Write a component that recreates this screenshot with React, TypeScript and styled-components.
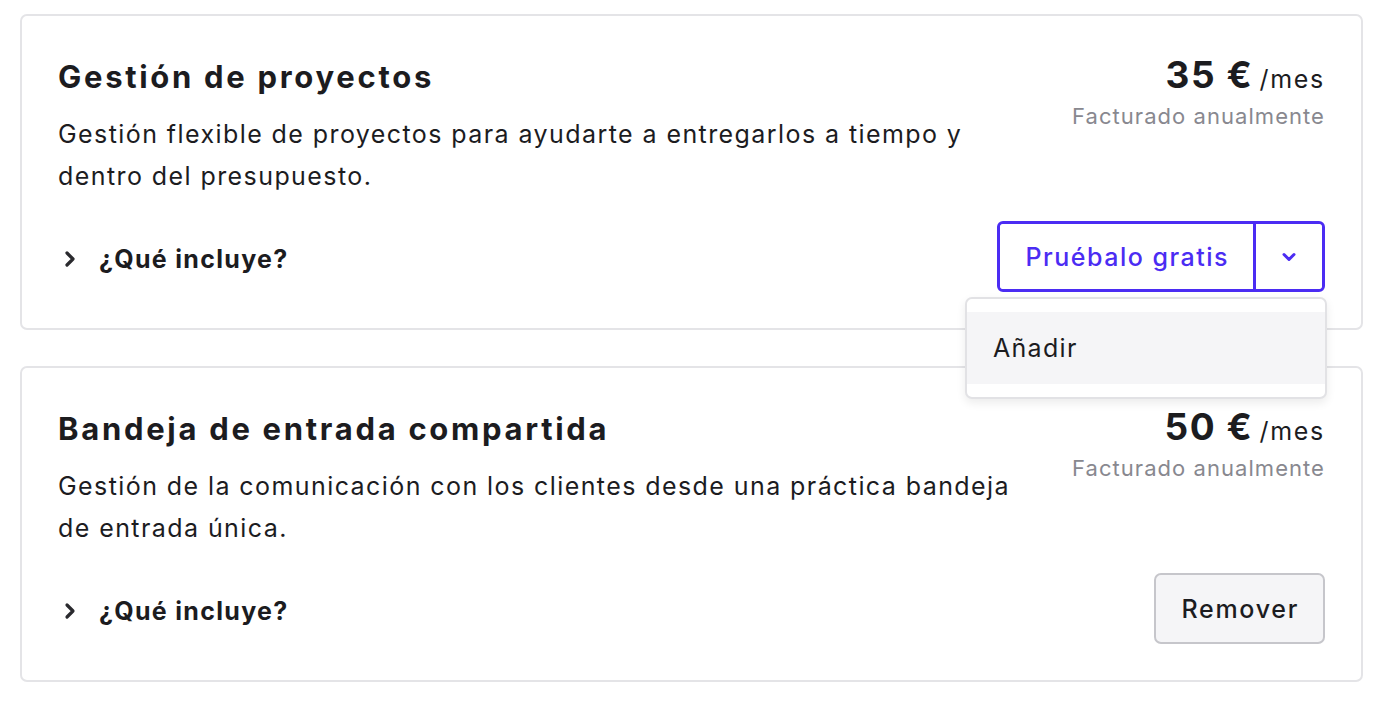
import React from "react";
import styled, { createGlobalStyle } from "styled-components";

const Global = createGlobalStyle`
  html, body { margin: 0; padding: 0; background: #ffffff; }
  body { font-family: Inter, "Noto Sans", sans-serif; color: #1c1c1f; -webkit-font-smoothing: antialiased; }
  * { box-sizing: border-box; }
`;

const Page = styled.div`
  padding: 14px 23px 0 20px;
  display: flex;
  flex-direction: column;
  gap: 36px;
`;

const Card = styled.section`
  position: relative;
  border: 2px solid #e4e4e7;
  border-radius: 7px;
  padding: 38px 36px 36px;
  display: flex;
  flex-direction: column;
  gap: 24px;
`;

const Top = styled.div`
  display: flex;
  gap: 40px;
  align-items: flex-start;
`;

const Info = styled.div`
  flex: 1;
  min-width: 0;
`;

const Title = styled.h2`
  margin: 0;
  font-size: 31px;
  line-height: 45px;
  font-weight: 700;
  letter-spacing: 2.7px;
  color: #1c1c1f;
`;

const Desc = styled.p`
  margin: 14px 0 0;
  font-size: 25px;
  line-height: 42px;
  font-weight: 400;
  letter-spacing: 1.42px;
  color: #1c1c1f;
`;

const PriceCol = styled.div`
  flex: none;
  display: flex;
  flex-direction: column;
  align-items: flex-end;
`;

const Price = styled.div`
  font-size: 37px;
  line-height: 42px;
  font-weight: 700;
  letter-spacing: 1.6px;
  color: #1c1c1f;
  white-space: nowrap;
`;

const Per = styled.span`
  font-size: 25px;
  font-weight: 400;
  letter-spacing: 1.7px;
  margin-left: 6px;
`;

const Billed = styled.div`
  font-size: 22px;
  line-height: 33px;
  letter-spacing: 1.05px;
  color: #88888f;
`;

const Bottom = styled.div`
  display: flex;
  justify-content: space-between;
  align-items: center;
`;

const Toggle = styled.button`
  display: flex;
  align-items: center;
  gap: 21px;
  border: none;
  background: none;
  padding: 0 0 0 4px;
  margin-top: 4px;
  font-family: inherit;
  font-size: 25px;
  font-weight: 700;
  letter-spacing: 1.3px;
  color: #1c1c1f;
  cursor: pointer;
`;

const SplitWrap = styled.div`
  position: relative;
`;

const Split = styled.div`
  display: flex;
  height: 71px;
  border: 3px solid #4b2cf3;
  border-radius: 6px;
`;

const SplitMain = styled.button`
  border: none;
  background: #fff;
  color: #4b2cf3;
  font-family: inherit;
  font-size: 25px;
  font-weight: 500;
  letter-spacing: 1.5px;
  padding: 0 24px 0 26px;
  border-radius: 4px 0 0 4px;
  cursor: pointer;
`;

const SplitArrow = styled.button`
  width: 69px;
  border: none;
  border-left: 3px solid #4b2cf3;
  background: #fff;
  border-radius: 0 4px 4px 0;
  display: flex;
  align-items: center;
  justify-content: center;
  cursor: pointer;
`;

const Menu = styled.div`
  position: absolute;
  top: 76px;
  right: -2px;
  width: 362px;
  background: #fff;
  border: 2px solid #e2e2e5;
  border-radius: 7px;
  padding: 13px 0;
  box-shadow: 0 4px 10px rgba(0, 0, 0, 0.08);
  z-index: 2;
`;

const MenuItem = styled.div`
  height: 72px;
  display: flex;
  align-items: center;
  padding-left: 26px;
  background: #f5f5f7;
  font-size: 25px;
  letter-spacing: 1.3px;
  color: #1c1c1f;
`;

const Secondary = styled.button`
  height: 71px;
  padding: 0 24px 0 25px;
  background: #f5f5f7;
  border: 2px solid #c6c6cb;
  border-radius: 7px;
  font-family: inherit;
  font-size: 25px;
  font-weight: 500;
  letter-spacing: 1.7px;
  color: #1c1c1f;
  cursor: pointer;
`;

const ChevronRight = () => (
  <svg width="16" height="18" viewBox="0 0 16 18" fill="none">
    <path d="M5 3l6 6-6 6" stroke="#2a2a2e" strokeWidth="3.2" strokeLinecap="round" strokeLinejoin="round" />
  </svg>
);

const ChevronDown = () => (
  <svg width="16" height="12" viewBox="0 0 16 12" fill="none">
    <path d="M3 3.5l5 5 5-5" stroke="#4b2cf3" strokeWidth="3" strokeLinecap="round" strokeLinejoin="round" />
  </svg>
);

type Plan = {
  title: string;
  desc: string;
  price: string;
  added: boolean;
};

const plans: Plan[] = [
  {
    title: "Gestión de proyectos",
    desc: "Gestión flexible de proyectos para ayudarte a entregarlos a tiempo y dentro del presupuesto.",
    price: "35 €",
    added: false,
  },
  {
    title: "Bandeja de entrada compartida",
    desc: "Gestión de la comunicación con los clientes desde una práctica bandeja de entrada única.",
    price: "50 €",
    added: true,
  },
];

export default function App() {
  return (
    <>
      <Global />
      <Page>
        {plans.map((p) => (
          <Card key={p.title}>
            <Top>
              <Info>
                <Title>{p.title}</Title>
                <Desc>{p.desc}</Desc>
              </Info>
              <PriceCol>
                <Price>
                  {p.price}
                  <Per>/mes</Per>
                </Price>
                <Billed>Facturado anualmente</Billed>
              </PriceCol>
            </Top>
            <Bottom>
              <Toggle>
                <ChevronRight />
                ¿Qué incluye?
              </Toggle>
              {p.added ? (
                <Secondary>Remover</Secondary>
              ) : (
                <SplitWrap>
                  <Split>
                    <SplitMain>Pruébalo gratis</SplitMain>
                    <SplitArrow>
                      <ChevronDown />
                    </SplitArrow>
                  </Split>
                  <Menu>
                    <MenuItem>Añadir</MenuItem>
                  </Menu>
                </SplitWrap>
              )}
            </Bottom>
          </Card>
        ))}
      </Page>
    </>
  );
}
